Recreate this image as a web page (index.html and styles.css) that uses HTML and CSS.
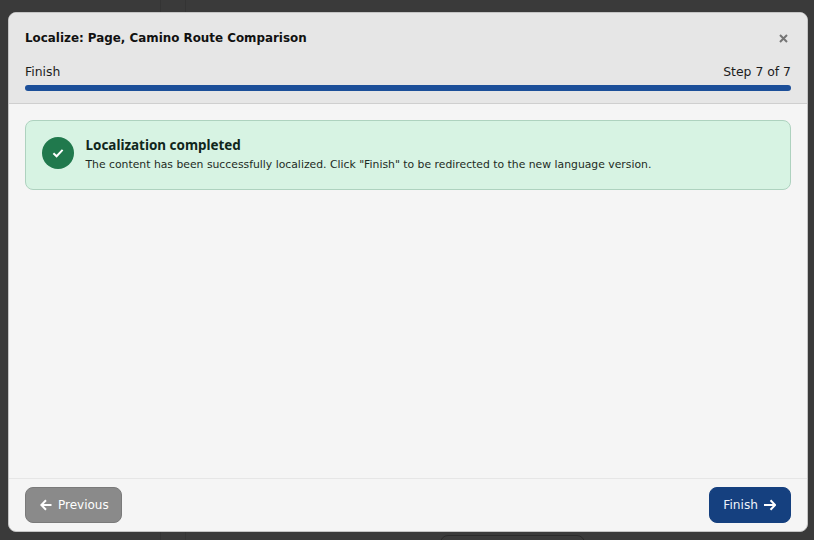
FILE: index.html
```html
<!DOCTYPE html>
<html lang="en">
<head>
  <meta charset="UTF-8" />
  <meta name="viewport" content="width=device-width, initial-scale=1.0"/>
  <title>Localize</title>
  <link rel="stylesheet" href="styles.css">
</head>
<body>
  <div class="backdrop">
    <div class="bg-line bg-line-a"></div>
    <div class="bg-line bg-line-b"></div>
    <div class="bg-pill"></div>
  </div>

  <div class="modal">
    <div class="modal-header">
      <div class="title-row">
        <h2 class="modal-title">Localize: Page, Camino Route Comparison</h2>
        <span class="close-btn">
          <svg width="9" height="9" viewBox="0 0 9 9"><path d="M1 1l7 7M8 1l-7 7" stroke="currentColor" stroke-width="2" fill="none"/></svg>
        </span>
      </div>
      <div class="step-row">
        <span>Finish</span>
        <span>Step 7 of 7</span>
      </div>
      <div class="progress-container">
        <div class="progress-bar" style="width: 100%"></div>
      </div>
    </div>

    <div class="modal-body">
      <div class="success-box">
        <div class="success-icon">
          <svg width="12" height="10" viewBox="0 0 12 10"><path d="M1.4 5.2l3.2 3.1 6-6.4" stroke="#fff" stroke-width="2" fill="none"/></svg>
        </div>
        <div class="success-copy">
          <div class="success-title">Localization completed</div>
          <div class="success-text">The content has been successfully localized. Click "Finish" to be redirected to the new language version.</div>
        </div>
      </div>
    </div>

    <div class="modal-footer">
      <button class="btn btn-prev">
        <svg width="12" height="12" viewBox="0 0 12 12"><path d="M11.5 6H1.5M6 1.2L1.3 6 6 10.8" stroke="#fff" stroke-width="2" fill="none"/></svg>
        Previous
      </button>
      <button class="btn btn-next">
        Finish
        <svg width="12" height="12" viewBox="0 0 12 12"><path d="M0 6h11M6.5 1.2L11.2 6 6.5 10.8" stroke="#fff" stroke-width="2" fill="none"/></svg>
      </button>
    </div>
  </div>
</body>
</html>
```

FILE: styles.css
```css
* {
  box-sizing: border-box;
}

html, body {
  height: 100%;
}

body {
  margin: 0;
  background-color: #3a3a3a;
  font-family: "DejaVu Sans", sans-serif;
  color: #1c1c1c;
  overflow: hidden;
  padding: 12px 6px 8px 8px;
}

.backdrop {
  position: absolute;
  inset: 0;
}

.bg-line {
  position: absolute;
  top: 0;
  bottom: 0;
  width: 1px;
  background-color: #343434;
}

.bg-line-a {
  left: 160px;
}

.bg-line-b {
  left: 185px;
}

.bg-pill {
  position: absolute;
  left: 440px;
  top: 535px;
  width: 145px;
  height: 30px;
  border: 1px solid #2a2a2a;
  border-radius: 8px;
}

.modal {
  position: relative;
  height: 100%;
  display: flex;
  flex-direction: column;
  background-color: #f5f5f5;
  border: 1px solid #c4c4c4;
  border-radius: 8px;
  overflow: hidden;
}

.modal-header {
  height: 91px;
  flex: none;
  padding: 16px 16px 0;
  background-color: #e6e6e6;
  border-bottom: 1px solid #cfcfcf;
}

.title-row {
  display: flex;
  justify-content: space-between;
  align-items: center;
  height: 18px;
}

.modal-title {
  margin: 0;
  font-size: 11.9px;
  font-weight: 700;
  color: #111;
}

.close-btn {
  display: flex;
  margin-right: 3px;
  color: #757575;
}

.step-row {
  display: flex;
  justify-content: space-between;
  margin-top: 17px;
  font-size: 12.4px;
  line-height: 15px;
}

.progress-container {
  margin-top: 6px;
  height: 6px;
  border-radius: 3px;
  background-color: #d0d0d0;
  overflow: hidden;
}

.progress-bar {
  height: 100%;
  background-color: #1c4f99;
}

.modal-body {
  flex: 1;
  padding: 16px;
}

.success-box {
  display: flex;
  align-items: flex-start;
  gap: 12px;
  padding: 16px;
  background-color: #d7f3e3;
  border: 1px solid #aed2bf;
  border-radius: 8px;
}

.success-icon {
  flex: none;
  width: 32px;
  height: 32px;
  display: flex;
  align-items: center;
  justify-content: center;
  border-radius: 50%;
  background-color: #20794d;
}

.success-copy {
  margin-left: -0.5px;
}

.success-title {
  font-family: "Noto Sans", sans-serif;
  font-size: 13.45px;
  font-weight: 700;
  line-height: 16px;
  color: #10261b;
}

.success-text {
  margin-top: 4px;
  font-size: 10.82px;
  line-height: 16px;
  color: #1d2b24;
}

.modal-footer {
  height: 53px;
  flex: none;
  display: flex;
  justify-content: space-between;
  align-items: center;
  padding: 0 16px;
  border-top: 1px solid #e6e6e6;
}

.btn {
  display: flex;
  align-items: center;
  gap: 6px;
  height: 36px;
  padding: 0 14px;
  font-family: "DejaVu Sans", sans-serif;
  font-size: 12px;
  color: #fff;
  border-radius: 8px;
  cursor: pointer;
}

.btn-prev {
  padding-right: 12px;
  background-color: #8a8a8a;
  border: 1px solid #7a7a7a;
}

.btn-next {
  padding: 0 14px 0 13px;
  font-size: 12.2px;
  color: #eef3fa;
  background-color: #15407f;
  border: 1px solid #15407f;
}
```
